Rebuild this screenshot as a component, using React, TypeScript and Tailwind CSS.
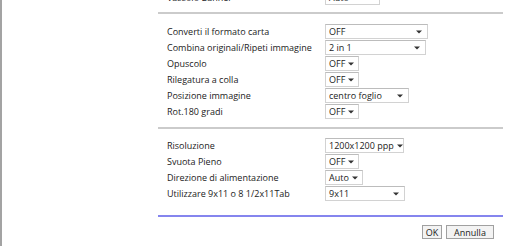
import React from "react";

type Row = { label: string; value: string; w: string };

const section1: Row[] = [
  { label: "Converti il formato carta", value: "OFF", w: "w-[103px]" },
  { label: "Combina originali/Ripeti immagine", value: "2 in 1", w: "w-[101px]" },
  { label: "Opuscolo", value: "OFF", w: "w-[34px]" },
  { label: "Rilegatura a colla", value: "OFF", w: "w-[34px]" },
  { label: "Posizione immagine", value: "centro foglio", w: "w-[84px]" },
  { label: "Rot.180 gradi", value: "OFF", w: "w-[34px]" },
];

const section2: Row[] = [
  { label: "Risoluzione", value: "1200x1200 ppp", w: "w-[79px]" },
  { label: "Svuota Pieno", value: "OFF", w: "w-[34px]" },
  { label: "Direzione di alimentazione", value: "Auto", w: "w-[38px]" },
  { label: "Utilizzare 9x11 o 8 1/2x11Tab", value: "9x11", w: "w-[80px]" },
];

function Select({ value, w }: { value: string; w: string }) {
  return (
    <div
      className={`${w} flex h-[15px] shrink-0 items-center justify-between gap-[3px] border border-[#d2d2d2] border-t-[#bcbcbc] bg-white pl-[3px] pr-[5px]`}
    >
      <span className="whitespace-nowrap leading-none text-[#222]">{value}</span>
      {/* freccia */}
      <svg width="6" height="4" viewBox="0 0 6 4" className="shrink-0">
        <path d="M0 0.5h6L3 3.5Z" fill="#333" />
      </svg>
    </div>
  );
}

function FormRow({ label, value, w }: Row) {
  return (
    <div className="flex h-[15px] items-center">
      <div className="w-[167px] shrink-0 whitespace-nowrap pl-[9px] leading-none text-[#222]">
        {label}
      </div>
      <Select value={value} w={w} />
    </div>
  );
}

export default function App() {
  return (
    <div
      className="flex h-[246px] w-[517px] overflow-hidden bg-white text-[9px]"
      style={{ fontFamily: '"Open Sans", "Noto Sans", sans-serif' }}
    >
      <div className="h-full w-[2px] bg-[#a3a3a3]" />
      <div className="ml-[156px] flex w-[345px] flex-col">
        {/* riga tagliata in alto */}
        <div className="-mt-[10px]">
          <FormRow label="Vassoio Banner" value="Auto" w="w-[55px]" />
        </div>
        <div className="mt-[7px] h-[2px] bg-[#cbcbcb]" />

        <div className="mt-[10px] flex flex-col gap-[1px]">
          {section1.map((r) => (
            <FormRow key={r.label} {...r} />
          ))}
        </div>

        <div className="mt-[8px] h-[2px] bg-[#cbcbcb]" />

        <div className="mt-[9px] flex flex-col gap-[1px]">
          {section2.map((r) => (
            <FormRow key={r.label} {...r} />
          ))}
        </div>

        <div className="mt-[14px] h-[2px] bg-[#8585ee]" />

        <div className="mt-[8px] flex justify-end gap-[4px] pr-[9px]">
          <button className="flex h-[14px] w-[20px] items-center justify-center border border-[#a0a0a0] bg-[#f3f3f3] leading-none text-[#222]">
            OK
          </button>
          <button className="flex h-[14px] w-[48px] items-center justify-center border border-[#a0a0a0] bg-[#f3f3f3] leading-none text-[#222]">
            Annulla
          </button>
        </div>
      </div>
    </div>
  );
}
